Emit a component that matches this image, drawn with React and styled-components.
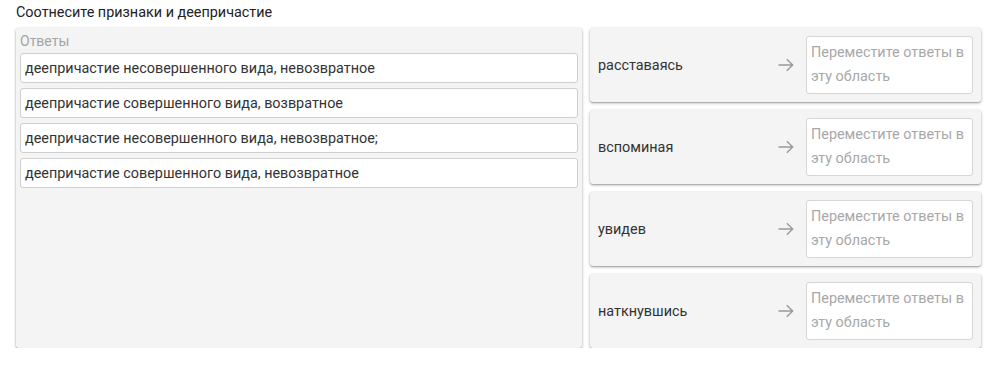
import React from 'react'
import styled, { createGlobalStyle } from 'styled-components'

const answers = [
  'деепричастие несовершенного вида, невозвратное',
  'деепричастие совершенного вида, возвратное',
  'деепричастие несовершенного вида, невозвратное;',
  'деепричастие совершенного вида, невозвратное',
]

const words = ['расставаясь', 'вспоминая', 'увидев', 'наткнувшись']

const GlobalStyle = createGlobalStyle`
  body {
    margin: 0;
    background: #fff;
    font-family: Roboto, "Liberation Sans", Arial, sans-serif;
    color: #333;
  }
`

const Page = styled.div`
  padding: 5px 14px 0 16px;
`

const Title = styled.div`
  font-size: 14.4px;
  line-height: 16px;
  color: #222;
  margin-bottom: 7px;
`

const Board = styled.div`
  display: grid;
  grid-template-columns: 566px 391px;
  gap: 8px;
`

const Panel = styled.div`
  background: #f4f4f4;
  border-radius: 3px;
  box-shadow: 0 1px 3px rgba(0, 0, 0, 0.35), 0 1px 1px rgba(0, 0, 0, 0.12);
`

const AnswersPanel = styled(Panel)`
  padding: 5px 4px;
  display: flex;
  flex-direction: column;
  gap: 5px;
`

const Label = styled.div`
  font-size: 14px;
  line-height: 17px;
  color: #a4a4a4;
  margin-bottom: -2px;
`

const Answer = styled.div`
  height: 30px;
  box-sizing: border-box;
  background: #fff;
  border: 1px solid #cfcfcf;
  border-radius: 3px;
  padding: 0 4px;
  display: flex;
  align-items: center;
  font-size: 14.4px;
  color: #333;
`

const Column = styled.div`
  display: flex;
  flex-direction: column;
  gap: 8px;
`

const Card = styled(Panel)`
  height: 74px;
  box-sizing: border-box;
  padding: 8px;
  display: flex;
  align-items: center;
`

const Word = styled.div`
  flex: 1;
  font-size: 14.4px;
  color: #333;
`

const Arrow = styled.svg`
  width: 20px;
  height: 20px;
  margin-right: 10px;
  flex: none;
`

const Drop = styled.div`
  width: 167px;
  height: 58px;
  box-sizing: border-box;
  background: #fff;
  border: 1px solid #d6d6d6;
  border-radius: 3px;
  padding: 4px 4px;
  font-size: 14.4px;
  line-height: 24px;
  color: #a8a8a8;
`

export default function App() {
  return (
    <Page>
      <GlobalStyle />
      <Title>Соотнесите признаки и деепричастие</Title>
      <Board>
        <AnswersPanel>
          <Label>Ответы</Label>
          {answers.map((a, i) => (
            <Answer key={i}>{a}</Answer>
          ))}
        </AnswersPanel>
        <Column>
          {words.map((w) => (
            <Card key={w}>
              <Word>{w}</Word>
              <Arrow viewBox="0 0 24 24">
                <path d="M3 12h17M13 5l7 7-7 7" fill="none" stroke="#9a9a9a" strokeWidth="1.7" />
              </Arrow>
              <Drop>Переместите ответы в эту область</Drop>
            </Card>
          ))}
        </Column>
      </Board>
    </Page>
  )
}
